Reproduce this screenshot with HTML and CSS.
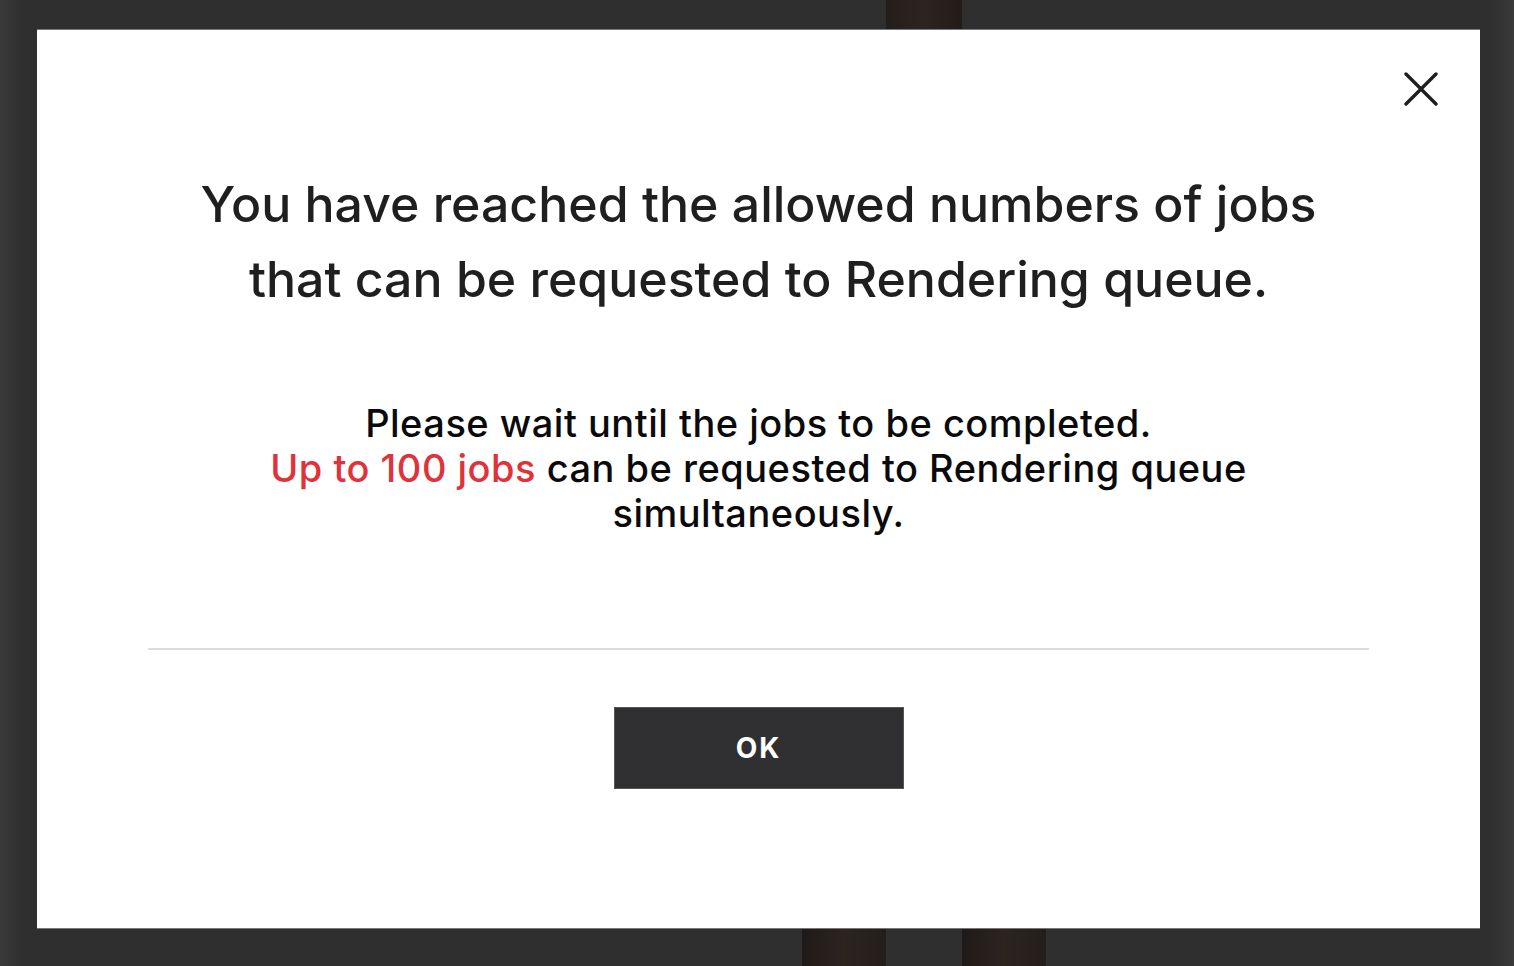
FILE: index.html
```html
<!DOCTYPE html>
<html lang="en">

<head>
  <meta charset="UTF-8">
  <meta name="viewport" content="width=device-width, initial-scale=1.0">
  <title>Rendering queue limit</title>
  <link rel="stylesheet" href="styles.css">
</head>

<body class="page">
  <!-- figure behind the backdrop -->
  <div class="figure-head"></div>
  <div class="figure-leg leg-left"></div>
  <div class="figure-leg leg-right"></div>

  <div class="modal">
    <button class="modal-close" aria-label="Close">
      <svg width="34" height="34" viewBox="0 0 34 34">
        <path d="M2 2L32 32M32 2L2 32" stroke="#1f1f1f" stroke-width="3.4" stroke-linecap="round" fill="none" />
      </svg>
    </button>

    <h2 class="modal-title">You have reached the allowed numbers of jobs<br>that can be requested to Rendering queue.</h2>

    <p class="modal-text">
      Please wait until the jobs to be completed.<br>
      <span class="text-red">Up to 100 jobs</span> can be requested to Rendering queue<br>
      simultaneously.
    </p>

    <div class="modal-footer">
      <button class="btn-ok">OK</button>
    </div>
  </div>
</body>

</html>
```

FILE: styles.css
```css
.page {
  margin: 0;
  height: 966px;
  overflow: hidden;
  position: relative;
  font-family: Inter, "Noto Sans", Arial, sans-serif;
  background: linear-gradient(90deg, #3a3a3a 0, #2f2f2f 24px, #2f2f2f calc(100% - 24px), #3a3a3a 100%);
  padding: 30px 34px 0 37px;
  box-sizing: border-box;
}

.figure-head {
  position: absolute;
  left: 886px;
  top: 0;
  width: 76px;
  height: 40px;
  background: linear-gradient(90deg, #241e1b, #2c2420 50%, #221c19);
}

.figure-leg {
  position: absolute;
  top: 920px;
  width: 84px;
  height: 46px;
  background: linear-gradient(90deg, #1f1a18, #2d2420 50%, #241e1b);
}

.leg-left {
  left: 802px;
}

.leg-right {
  left: 962px;
}

.modal {
  position: relative;
  z-index: 1;
  width: 1443px;
  height: 898px;
  background-color: #fff;
  box-shadow: 0 -1px 0 #777, 0 1px 0 #777;
  box-sizing: border-box;
  padding: 137px 111px 0;
  text-align: center;
}

.modal-close {
  position: absolute;
  top: 42px;
  right: 42px;
  width: 34px;
  height: 34px;
  padding: 0;
  border: none;
  background: none;
  cursor: pointer;
}

.modal-title {
  margin: 0;
  font-size: 50px;
  font-weight: 500;
  line-height: 75px;
  color: #1f1f1f;
}

.modal-text {
  margin: 84px 0 0;
  font-size: 38px;
  font-weight: 500;
  line-height: 45px;
  letter-spacing: 0.5px;
  color: #0a0a0a;
}

.text-red {
  color: #e0323a;
}

.modal-footer {
  margin-top: 112px;
  border-top: 2px solid #dcdcdc;
  padding-top: 57px;
}

.btn-ok {
  width: 290px;
  height: 82px;
  background-color: #303032;
  border: 1px solid #555;
  color: #fff;
  font-family: Inter, "Noto Sans", Arial, sans-serif;
  font-size: 28px;
  font-weight: 700;
  letter-spacing: 2px;
  cursor: pointer;
}
```
